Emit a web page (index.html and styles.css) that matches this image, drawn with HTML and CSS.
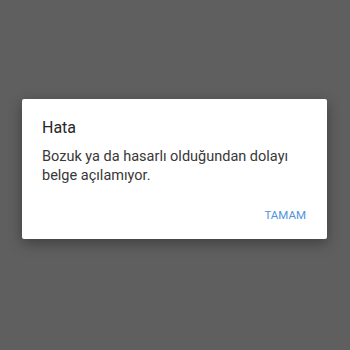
FILE: index.html
```html
<!DOCTYPE html>
<html lang="tr">
<head>
  <meta charset="UTF-8" />
  <meta name="viewport" content="width=device-width, initial-scale=1.0"/>
  <title>Hata</title>
  <link rel="stylesheet" href="styles.css">
</head>
<body>

  <div class="dialog">
    <h1 class="dialog-title">Hata</h1>
    <p class="dialog-text">Bozuk ya da hasarlı olduğundan dolayı belge açılamıyor.</p>
    <div class="dialog-actions">
      <button class="btn-ok">TAMAM</button>
    </div>
  </div>

</body>
</html>
```

FILE: styles.css
```css
body {
  margin: 0;
  padding: 99px 23px 0 22px;
  font-family: Roboto, 'Noto Sans', sans-serif;
  background: #5f5f5f;
  height: 100vh;
  box-sizing: border-box;
}

.dialog {
  background: #ffffff;
  border-radius: 2px;
  padding: 18px 20px 17px 20px;
  height: 140px;
  box-sizing: border-box;
  box-shadow: 0 4px 14px rgba(0,0,0,0.35);
  display: flex;
  flex-direction: column;
}

.dialog-title {
  margin: 0;
  font-size: 16px;
  font-weight: 400;
  line-height: 22px;
  color: #262626;
}

.dialog-text {
  margin: 8px 0 0 0;
  font-size: 14.5px;
  line-height: 19px;
  color: #383838;
}

.dialog-actions {
  margin-top: auto;
  display: flex;
  justify-content: flex-end;
}

.btn-ok {
  border: none;
  background: none;
  padding: 0;
  margin-right: 1px;
  font-family: inherit;
  font-size: 11.5px;
  font-weight: 400;
  color: #4f93dd;
  cursor: pointer;
}
```
